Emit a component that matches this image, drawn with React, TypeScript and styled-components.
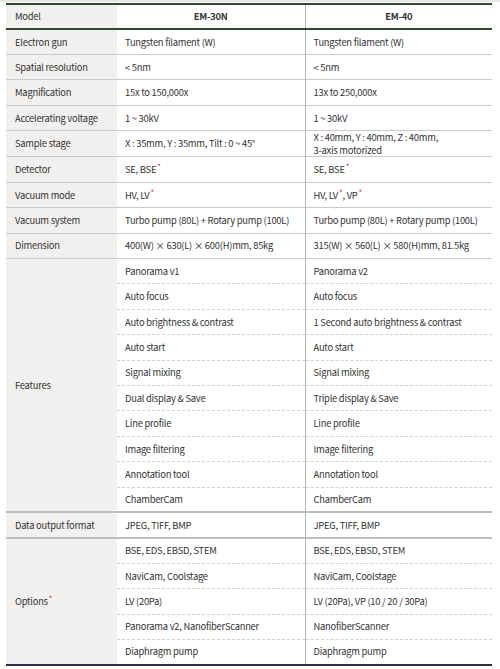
import React from 'react';
import styled, { createGlobalStyle } from 'styled-components';

const GlobalStyle = createGlobalStyle`
  body {
    margin: 0;
    background: #fff;
    font-family: "Noto Sans CJK KR", "Noto Sans", sans-serif;
  }
`;

const Page = styled.div`
  border-top: 2px solid #e6e6e6;
  padding: 1px 8px 4px 6px;
`;

const SpecTable = styled.table`
  width: 486px;
  border-collapse: collapse;
  table-layout: fixed;
  border-top: 2px solid #2f4a31;
  border-bottom: 2px solid #2b2f4b;
  color: #333;
  font-size: 9.4px;
  letter-spacing: -0.25px;
  line-height: 12.7px;
`;

const HeadRow = styled.tr`
  height: 25px;
  border-bottom: 2px solid #2f4a31;
`;

const HeadCell = styled.th<{ $model?: boolean; $divider?: boolean }>`
  font-weight: ${(p) => (p.$model ? 400 : 700)};
  text-align: ${(p) => (p.$model ? 'left' : 'center')};
  padding: 0 0 0 ${(p) => (p.$model ? '9px' : '0')};
  background: ${(p) => (p.$model ? '#f2f0ef' : '#fff')};
  border-left: ${(p) => (p.$divider ? '1px solid #b4b4b4' : 'none')};
`;

const Row = styled.tr`
  height: 25.4px;
`;

const Label = styled.th<{ $top: string }>`
  font-weight: 400;
  text-align: left;
  white-space: nowrap;
  padding: 0 0 0 9px;
  background: #f2f0ef;
  border-top: ${(p) => p.$top};
`;

const Value = styled.td<{ $top: string; $divider?: boolean }>`
  padding: 0 4px 0 8px;
  white-space: nowrap;
  vertical-align: middle;
  border-top: ${(p) => p.$top};
  border-left: ${(p) => (p.$divider ? '1px solid #b4b4b4' : 'none')};
`;

const Mark = styled.sup`
  color: #d7263d;
  font-size: 8px;
  line-height: 0;
  vertical-align: 3px;
  margin-left: 1px;
`;

const Star = () => <Mark>*</Mark>;

type Spec = {
  label: React.ReactNode;
  rows: [React.ReactNode, React.ReactNode][];
  heavy?: boolean;
};

const specs: Spec[] = [
  { label: 'Electron gun', rows: [['Tungsten filament (W)', 'Tungsten filament (W)']] },
  { label: 'Spatial resolution', rows: [['< 5nm', '< 5nm']] },
  { label: 'Magnification', rows: [['15x to 150,000x', '13x to 250,000x']] },
  { label: 'Accelerating voltage', rows: [['1 ~ 30kV', '1 ~ 30kV']] },
  {
    label: 'Sample stage',
    rows: [
      [
        'X : 35mm, Y : 35mm, Tilt : 0 ~ 45°',
        <>
          X : 40mm, Y : 40mm, Z : 40mm,
          <br />
          3-axis motorized
        </>,
      ],
    ],
  },
  {
    label: 'Detector',
    rows: [
      [
        <>SE, BSE<Star /></>,
        <>SE, BSE<Star /></>,
      ],
    ],
  },
  {
    label: 'Vacuum mode',
    rows: [
      [
        <>HV, LV<Star /></>,
        <>HV, LV<Star />, VP<Star /></>,
      ],
    ],
  },
  {
    label: 'Vacuum system',
    rows: [['Turbo pump (80L) + Rotary pump (100L)', 'Turbo pump (80L) + Rotary pump (100L)']],
  },
  {
    label: 'Dimension',
    rows: [['400(W) × 630(L) × 600(H)mm, 85kg', '315(W) × 560(L) × 580(H)mm, 81.5kg']],
  },
  {
    label: 'Features',
    rows: [
      ['Panorama v1', 'Panorama v2'],
      ['Auto focus', 'Auto focus'],
      ['Auto brightness & contrast', '1 Second auto brightness & contrast'],
      ['Auto start', 'Auto start'],
      ['Signal mixing', 'Signal mixing'],
      ['Dual display & Save', 'Triple display & Save'],
      ['Line profile', 'Line profile'],
      ['Image filtering', 'Image filtering'],
      ['Annotation tool', 'Annotation tool'],
      ['ChamberCam', 'ChamberCam'],
    ],
  },
  { label: 'Data output format', rows: [['JPEG, TIFF, BMP', 'JPEG, TIFF, BMP']], heavy: true },
  {
    label: <>Options<Star /></>,
    heavy: true,
    rows: [
      ['BSE, EDS, EBSD, STEM', 'BSE, EDS, EBSD, STEM'],
      ['NaviCam, Coolstage', 'NaviCam, Coolstage'],
      ['LV (20Pa)', 'LV (20Pa), VP (10 / 20 / 30Pa)'],
      ['Panorama v2, NanofiberScanner', 'NanofiberScanner'],
      ['Diaphragm pump', 'Diaphragm pump'],
    ],
  },
];

const SOLID = '1px solid #cbcbcb';
const HEAVY = '2px solid #bdbdbd';
const DASHED = '1px dashed #d2d2d2';

export default function App() {
  return (
    <Page>
      <GlobalStyle />
      <SpecTable>
        <colgroup>
          <col style={{ width: 111 }} />
          <col style={{ width: 188 }} />
          <col style={{ width: 187 }} />
        </colgroup>
        <thead>
          <HeadRow>
            <HeadCell $model>Model</HeadCell>
            <HeadCell>EM-30N</HeadCell>
            <HeadCell $divider>EM-40</HeadCell>
          </HeadRow>
        </thead>
        <tbody>
          {specs.map((spec, i) =>
            spec.rows.map(([a, b], j) => {
              const top = j === 0 ? (spec.heavy ? HEAVY : i === 0 ? 'none' : SOLID) : DASHED;
              return (
                <Row key={`${i}-${j}`}>
                  {j === 0 && (
                    <Label $top={top} rowSpan={spec.rows.length}>
                      {spec.label}
                    </Label>
                  )}
                  <Value $top={top}>{a}</Value>
                  <Value $top={top} $divider>
                    {b}
                  </Value>
                </Row>
              );
            })
          )}
        </tbody>
      </SpecTable>
    </Page>
  );
}
